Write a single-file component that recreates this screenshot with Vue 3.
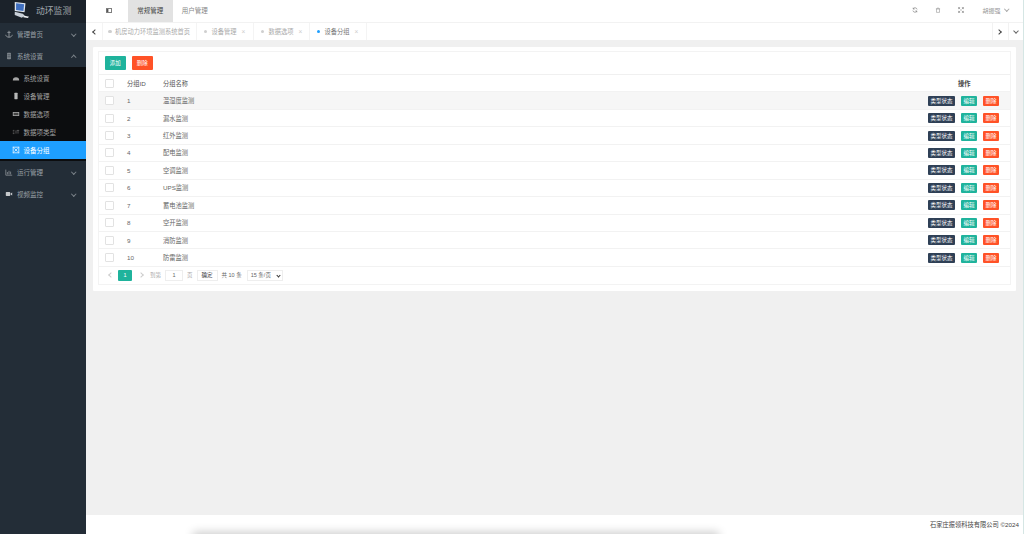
<script setup>
const rows = ['温湿度监测','漏水监测','红外监测','配电监测','空调监测','UPS监测','蓄电池监测','空开监测','消防监测','防雷监测']
const tabs = [
  { t: '机房动力环境监测系统首页', w: 94, home: true },
  { t: '设备管理', w: 57 },
  { t: '数据选项', w: 56 },
  { t: '设备分组', w: 57, on: true }
]
const subs = ['系统设置','设备管理','数据选项','数据项类型','设备分组']
</script>

<template>
  <div class="app">
    <aside class="side">
      <div class="logo">
        <svg class="logo-ic" width="18" height="17" viewBox="0 0 20 19">
          <path d="M3 0l12 1.500-1 10L3 10z" fill="#dfe6ee"/>
          <path d="M4.500 1.500l9 1-.8 7.500-8.200-1z" fill="#3f6fc0"/>
          <path d="M3 11l9 2 2 2-3 2.500-8-3z" fill="#c9d0d8"/>
          <path d="M13 15l6 1.500-1.500 1.500-5-1z" fill="#eef1f4"/>
        </svg>
        <span>动环监测</span>
      </div>
      <div class="item">
        <svg class="ic" viewBox="0 0 10 10"><path d="M5 1v8M3 3h4M1 6c0 2 2 3 4 3s4-1 4-3" fill="none" stroke="#8f959b" stroke-width="1.200"/></svg>
        <span>管理首页</span><i class="chev"></i>
      </div>
      <div class="item">
        <svg class="ic" viewBox="0 0 10 10"><rect x="2.500" y="1" width="5" height="8" rx="1" fill="#7d848a"/><path d="M3 3.500h4M3 6h4" stroke="#2a343e" stroke-width=".7"/></svg>
        <span>系统设置</span><i class="chev up"></i>
      </div>
      <div class="subs">
        <div v-for="(s, i) in subs" :key="s" class="sub" :class="{ on: i === 4 }">
          <svg v-if="i === 0" class="ic" viewBox="0 0 10 10"><path d="M1 8a4 4 0 018 0z" fill="#a5a5a5"/></svg>
          <svg v-else-if="i === 1" class="ic" viewBox="0 0 10 10"><rect x="3" y="1" width="4" height="8" rx=".6" fill="#b8b8b8"/></svg>
          <svg v-else-if="i === 2" class="ic" viewBox="0 0 10 10"><rect x="1" y="2.500" width="8" height="5" fill="#a5a5a5"/><rect x="2" y="3.500" width="6" height="3" fill="#444"/></svg>
          <svg v-else-if="i === 3" class="ic" viewBox="0 0 10 10"><path d="M1 3h2M1 5h2M1 7h2M5 3v4M6 3h3M7.500 3v4" stroke="#666" fill="none"/></svg>
          <svg v-else class="ic" viewBox="0 0 10 10"><path d="M1 1.500h8M1 8.500h8M1.500 1v8M8.500 1v8M3 3l4 4M7 3L3 7" stroke="#fff" stroke-width=".9" fill="none"/></svg>
          <span>{{ s }}</span>
        </div>
      </div>
      <div class="item">
        <svg class="ic" viewBox="0 0 10 10"><path d="M1 9V2M1 9h8M3 8V5M5 8V3.500M7 8V4.500" stroke="#8a9096" fill="none"/></svg>
        <span>运行管理</span><i class="chev"></i>
      </div>
      <div class="item">
        <svg class="ic" viewBox="0 0 10 10"><rect x="1" y="2.500" width="5.500" height="5" rx=".8" fill="#c6c9cc"/><path d="M7 4.500L9 3v4L7 5.500z" fill="#c6c9cc"/></svg>
        <span>视频监控</span><i class="chev"></i>
      </div>
    </aside>

    <main class="main">
      <header class="top">
        <svg class="fold" viewBox="0 0 8 6"><rect x=".5" y=".5" width="7" height="5" fill="none" stroke="#555"/><rect x="1" y="1" width="2.200" height="4" fill="#555"/></svg>
        <div class="nav on">常规管理</div>
        <div class="nav">用户管理</div>
        <div class="tools">
          <svg class="tool" viewBox="0 0 10 10"><path d="M8.500 4A3.600 3.600 0 002 3M1.500 6A3.600 3.600 0 008 7" fill="none" stroke="#777" stroke-width="1.100"/><path d="M2 1v2.500h2.300M8 9V6.500H5.700" fill="none" stroke="#777"/></svg>
          <svg class="tool" viewBox="0 0 10 10"><path d="M2.500 3h5v6h-5zM1.500 3h7M4 1.500h2" fill="none" stroke="#999"/></svg>
          <svg class="tool" viewBox="0 0 10 10"><path d="M1 1l3 3M9 1L6 4M1 9l3-3M9 9L6 6M1 3.500V1h2.500M6.500 1H9v2.500M1 6.500V9h2.500M6.500 9H9V6.500" fill="none" stroke="#777"/></svg>
          <span class="user">胡振强</span><i class="chev small"></i>
        </div>
      </header>

      <div class="tabbar">
        <div class="arrow"><i class="chev left"></i></div>
        <div v-for="t in tabs" :key="t.t" class="tab" :class="{ active: t.on, home: t.home }" :style="{ width: t.w + 'px' }">
          <b class="dot"></b><span>{{ t.t }}</span><em v-if="!t.home">×</em>
        </div>
        <div class="spacer"></div>
        <div class="arrow line"><i class="chev right"></i></div>
        <div class="arrow line"><i class="chev dark"></i></div>
      </div>

      <section class="body">
        <div class="card">
          <div class="box">
            <div class="bar">
              <span class="btn green">添加</span>
              <span class="btn red">删除</span>
            </div>
            <div class="row head">
              <span class="c-check"><i class="check"></i></span>
              <span class="c-id">分组ID</span>
              <span class="c-name">分组名称</span>
              <span class="c-act">操作</span>
            </div>
            <div v-for="(r, i) in rows" :key="r" class="row" :class="{ hover: i === 0 }">
              <span class="c-check"><i class="check"></i></span>
              <span class="c-id">{{ i + 1 }}</span>
              <span class="c-name">{{ r }}</span>
              <span class="ops">
                <span class="mini navy">类型状态</span>
                <span class="mini green">编辑</span>
                <span class="mini red">删除</span>
              </span>
            </div>
            <div class="pager">
              <i class="chev left pale"></i>
              <span class="cur">1</span>
              <i class="chev right pale"></i>
              <span class="muted">到第</span>
              <span class="input">1</span>
              <span class="muted">页</span>
              <span class="ok">确定</span>
              <span class="total">共 10 条</span>
              <span class="select">15 条/页<i class="tri"></i></span>
            </div>
          </div>
        </div>
      </section>

      <footer class="foot">
        <div class="shade"></div>
        <span>石家庄振领科技有限公司 ©2024</span>
      </footer>
    </main>
  </div>
</template>

<style>
html, body { margin: 0; overflow: hidden; background: #f0f0f0; }
</style>

<style scoped>
.app {
  display: flex;
  width: 1024px;
  height: 534px;
  overflow: hidden;
  font-family: "Liberation Sans", "Noto Sans CJK SC", sans-serif;
  font-size: 6.250px;
  color: #666;
}
.side { width: 86px; flex: none; background: #232d37; color: #9aa0a6; font-size: 6.500px; }
.logo {
  height: 23px;
  background: #1b222a;
  display: flex;
  align-items: center;
  padding-left: 12px;
  gap: 6px;
  font-size: 8.800px;
  color: #a2a8ae;
  box-sizing: border-box;
  padding-bottom: 2px;
}
.logo-ic { flex: none; }
.item {
  height: 22px;
  display: flex;
  align-items: center;
  padding-left: 5px;
  gap: 4px;
  position: relative;
}
.ic { width: 8px; height: 8px; flex: none; }
.subs { background: #0c0d0f; padding: 2px 0; }
.sub {
  height: 18px;
  display: flex;
  align-items: center;
  padding-left: 12px;
  gap: 3.500px;
  color: #a0a0a0;
}
.sub.on { background: #1e9fff; color: #fff; }
.chev {
  display: block;
  width: 2.500px;
  height: 2.500px;
  border-right: 0.6px solid #7c838a;
  border-bottom: 0.6px solid #7c838a;
  transform: rotate(45deg);
}
.item .chev { position: absolute; right: 11px; top: 8.500px; }
.item .chev.up { transform: rotate(225deg); top: 10.500px; }
.main { flex: 1; min-width: 0; display: flex; flex-direction: column; border-right: 1px solid #d5e6e4; }
.top {
  height: 23px;
  flex: none;
  background: #fff;
  display: flex;
  align-items: stretch;
  padding-left: 20px;
  box-sizing: border-box;
  border-bottom: 1px solid #f2f2f2;
  font-size: 6.500px;
}
.fold { width: 6px; height: 5px; align-self: center; margin: -2px 16px 0 0; }
.nav { width: 44.500px; display: flex; align-items: center; justify-content: center; color: #888; padding-bottom: 2px; box-sizing: border-box; }
.nav.on { background: #e2e2e2; color: #444; }
.tools { margin-left: auto; display: flex; align-items: center; padding: 0 15px 2px 0; font-size: 6px; }
.tool { width: 6px; height: 6px; margin-right: 17px; }
.tool:nth-child(3) { margin-right: 18px; }
.user { color: #999; margin-right: 4px; }
.chev.small { margin-top: -2px; border-color: #aaa; }
.tabbar {
  height: 17px;
  flex: none;
  background: #fff;
  display: flex;
  align-items: center;
  box-sizing: border-box;
}
.arrow {
  width: 17px;
  height: 100%;
  flex: none;
  display: flex;
  align-items: center;
  justify-content: center;
  border-right: 1px solid #f4f4f4;
  box-sizing: border-box;
}
.arrow.line { border-right: 0; border-left: 1px solid #f2f2f2; width: 15.500px; }
.chev.left { transform: rotate(135deg); border-color: #444; width: 3px; height: 3px; margin-left: 2px; }
.chev.right { transform: rotate(-45deg); border-color: #444; width: 3px; height: 3px; margin-right: 2px; }
.chev.dark { border-color: #666; width: 3px; height: 3px; margin-top: -2px; }
.chev.pale { border-color: #ccc; }
.spacer { flex: 1; }
.tab {
  height: 100%;
  flex: none;
  display: flex;
  align-items: center;
  box-sizing: border-box;
  padding-left: 6.500px;
  border-right: 1px solid #f4f4f4;
  white-space: nowrap;
  color: #aaa;
}
.tab.home { padding-left: 5px; }
.tab.active { color: #777; }
.dot {
  width: 3.500px;
  height: 3.500px;
  border-radius: 50%;
  background: #cfcfcf;
  margin-right: 4.500px;
  flex: none;
}
.tab.home .dot { margin-right: 3.500px; }
.tab.active .dot { background: #1e9fff; }
.tab em { font-style: normal; color: #ccc; margin-left: 5px; font-size: 6.500px; }
.body { flex: 1; background: #f0f0f0; padding: 7px 7px 0; }
.card { background: #fff; padding: 4px 5px 5px; border-radius: 1px; height: 244px; box-sizing: border-box; }
.box { border: 1px solid #f3f3f3; }
.bar {
  height: 23px;
  display: flex;
  align-items: center;
  padding-left: 6px;
  gap: 6.500px;
  box-sizing: border-box;
  border-bottom: 1px solid #f0f0f0;
}
.btn {
  width: 20.500px;
  height: 14px;
  display: flex;
  align-items: center;
  justify-content: center;
  color: #fff;
  font-size: 5.500px;
  border-radius: 1px;
}
.green { background: #1fb39c; }
.red { background: #ff5227; }
.row {
  height: 17.440px;
  display: flex;
  align-items: center;
  box-sizing: border-box;
  border-bottom: 1px solid #f2f2f2;
  position: relative;
}
.row.hover { background: #f6f6f6; }
.head { color: #555; }
.c-check { width: 28px; padding-left: 6px; box-sizing: border-box; display: flex; flex: none; }
.check {
  width: 9px;
  height: 9px;
  background: #fff;
  border: 1px solid #e2e2e2;
  border-radius: 1px;
  box-sizing: border-box;
  display: block;
}
.c-id { width: 36px; flex: none; }
.c-name { flex: 1; }
.c-act { position: absolute; left: 859px; color: #444; font-weight: 700; }
.ops { display: flex; gap: 6px; margin-right: 11px; }
.mini {
  height: 10px;
  display: flex;
  align-items: center;
  justify-content: center;
  color: #fff;
  font-size: 5.500px;
  border-radius: 1px;
  width: 16px;
}
.navy { background: #2f4056; width: 27px; }
.pager {
  height: 17px;
  display: flex;
  align-items: center;
  padding-left: 8px;
  color: #999;
  font-size: 5.500px;
}
.pager .chev.left { margin-right: 5px; }
.pager .chev.right { margin: 0 7px 0 4px; }
.cur {
  width: 14px;
  height: 11px;
  background: #1fb39c;
  color: #fff;
  display: flex;
  align-items: center;
  justify-content: center;
  border-radius: 1px;
  margin-right: 3px;
}
.muted { color: #aaa; }
.input, .ok, .select {
  height: 11px;
  display: flex;
  align-items: center;
  justify-content: center;
  border: 1px solid #eee;
  box-sizing: border-box;
  color: #666;
}
.input { width: 18px; margin: 0 4px; }
.ok { width: 21px; margin: 0 4px; color: #333; }
.total { color: #666; margin-right: 5px; }
.select { width: 36px; position: relative; justify-content: flex-start; padding-left: 3px; }
.tri {
  position: absolute;
  right: 2px;
  top: 3px;
  width: 2px;
  height: 2px;
  border-right: 1px solid #333;
  border-bottom: 1px solid #333;
  transform: rotate(45deg);
}
.foot {
  height: 19px;
  flex: none;
  background: #fff;
  display: flex;
  align-items: center;
  justify-content: flex-end;
  padding-right: 4px;
  color: #444;
  font-size: 6.250px;
  position: relative;
  overflow: hidden;
}
.shade {
  position: absolute;
  left: 110px;
  top: 20px;
  width: 520px;
  height: 20px;
  box-shadow: 0 0 10px 3px rgba(0, 0, 0, .2);
}
</style>
